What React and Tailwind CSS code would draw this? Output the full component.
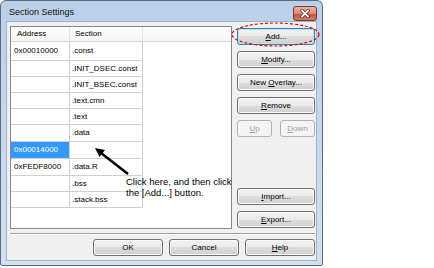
import React from 'react'

const rows = [
  { addr: '0x00010000', sec: '.const', h: 'h-[19px]' },
  { addr: '', sec: '.INIT_DSEC.const', h: 'h-[16px]' },
  { addr: '', sec: '.INIT_BSEC.const', h: 'h-[16px]' },
  { addr: '', sec: '.text.cmn', h: 'h-[16px]' },
  { addr: '', sec: '.text', h: 'h-[16px]' },
  { addr: '', sec: '.data', h: 'h-[17px]' },
  { addr: '0x00014000', sec: '', h: 'h-[17px]', selected: true },
  { addr: '0xFEDF8000', sec: '.data.R', h: 'h-[17px]' },
  { addr: '', sec: '.bss', h: 'h-[16px]' },
  { addr: '', sec: '.stack.bss', h: 'h-[16px]' },
]

// Win7 style push button
const Btn = ({ children, className = '', focused, disabled }) => {
  let look =
    'border-[#707070] text-black bg-[linear-gradient(to_bottom,#f2f2f2_0%,#ebebeb_50%,#dddddd_50%,#cfcfcf_100%)] shadow-[inset_0_0_0_1px_#fbfbfb]'
  if (focused)
    look =
      'border-[#3c7fb1] text-black bg-[linear-gradient(to_bottom,#f2f2f2_0%,#ebebeb_50%,#dddddd_50%,#cfcfcf_100%)] shadow-[inset_0_0_0_1px_#b7e2f7]'
  if (disabled) look = 'border-[#adb2b5] text-[#a0a0a0] bg-[#f4f4f4]'
  return (
    <div
      className={`h-[17px] flex items-center justify-center border rounded-[3px] text-[8px] leading-none ${look} ${className}`}
    >
      <span className="whitespace-pre">{children}</span>
    </div>
  )
}

export default function App() {
  return (
    <div className="relative w-[434px] h-[268px] bg-white font-['Liberation_Sans',Arial,sans-serif]">
      {/* Window */}
      <div className="w-[323px] h-[266px] flex flex-col border border-[#5b6b80] rounded-t-[6px] rounded-b-[2px] bg-gradient-to-b from-[#bad0e9] to-[#d2e0f0]">
        {/* Title bar */}
        <div className="h-[21px] flex items-start justify-between">
          <div className="pl-[8px] pt-[7px] text-[9px] leading-none text-[#111]">Section Settings</div>
          <div className="mt-[5px] mr-[5px] w-[24px] h-[15px] rounded-[3px] border border-[#7a3a33] bg-[linear-gradient(to_bottom,#ebb4a6_0%,#d98a77_50%,#c8563f_55%,#d27a63_100%)] flex items-center justify-center">
            <svg width="10" height="9" viewBox="0 0 10 9">
              <path d="M2 1.5 L8 7.5 M8 1.5 L2 7.5" stroke="#5a2a24" strokeWidth="3.2" strokeLinecap="square" />
              <path d="M2 1.5 L8 7.5 M8 1.5 L2 7.5" stroke="#ffffff" strokeWidth="1.8" strokeLinecap="square" />
            </svg>
          </div>
        </div>

        {/* Client area */}
        <div className="mx-[6px] h-[238px] bg-[#f0f0f0] shadow-[0_0_0_1px_#9fb3c8] pt-[4px] pl-[3px] pr-[1px] flex flex-col">
          <div className="flex">
            {/* List view */}
            <div className="w-[222px] h-[203px] border border-[#828790] bg-white text-[8px] leading-none text-black">
              <div className="flex h-[15px] border-b border-[#d5d5d5] bg-gradient-to-b from-white to-[#f5f6f7]">
                <div className="w-[59px] border-r border-[#e3e3e3] pl-[6px] flex items-center">Address</div>
                <div className="w-[73px] border-r border-[#e3e3e3] pl-[5px] flex items-center">Section</div>
              </div>
              {rows.map((r, i) => (
                <div key={i} className={`flex ${r.h}`}>
                  <div
                    className={`w-[59px] border-r border-b border-[#d0d0d0] pl-[3px] flex items-center ${
                      r.selected ? 'bg-[#3399ff] text-white' : ''
                    }`}
                  >
                    {r.addr}
                  </div>
                  <div className="w-[73px] border-r border-b border-[#d0d0d0] pl-[2px] flex items-center">{r.sec}</div>
                </div>
              ))}
            </div>

            {/* Button column */}
            <div className="ml-[5px] w-[78px] flex flex-col pt-[2px] pb-[1px]">
              <Btn focused>
                <u>A</u>dd...
              </Btn>
              <Btn className="mt-[6px]">
                <u>M</u>odify...
              </Btn>
              <Btn className="mt-[6px]">
                New <u>O</u>verlay...
              </Btn>
              <Btn className="mt-[6px]">
                <u>R</u>emove
              </Btn>
              <div className="mt-[6px] flex justify-between">
                <Btn disabled className="w-[35px]">
                  <u>U</u>p
                </Btn>
                <Btn disabled className="w-[35px]">
                  <u>D</u>own
                </Btn>
              </div>
              <Btn className="mt-auto">
                <u>I</u>mport...
              </Btn>
              <Btn className="mt-[6px]">
                <u>E</u>xport...
              </Btn>
            </div>
          </div>

          {/* Separator */}
          <div className="mt-[4px] h-[2px] border-t border-[#a0a0a0] border-b border-b-white" />

          {/* Bottom buttons */}
          <div className="mt-[4px] flex justify-end gap-[6px]">
            <Btn className="w-[70px]">OK</Btn>
            <Btn className="w-[70px]">Cancel</Btn>
            <Btn className="w-[70px]">
              <u>H</u>elp
            </Btn>
          </div>
        </div>
      </div>

      {/* Red dashed ellipse around Add */}
      <svg className="absolute left-[231px] top-[22px]" width="89" height="25" viewBox="0 0 89 25">
        <ellipse cx="44.5" cy="12.5" rx="43.5" ry="11.5" fill="none" stroke="#e00000" strokeWidth="1.2" strokeDasharray="3 2" />
      </svg>

      {/* Arrow */}
      <svg className="absolute left-0 top-0" width="434" height="268" viewBox="0 0 434 268">
        <line x1="128" y1="174" x2="101" y2="153" stroke="#000" strokeWidth="2.5" />
        <polygon points="95,148 105,150 99.5,157" fill="#000" />
      </svg>

      {/* Callout */}
      <div className="absolute left-[126px] top-[176px] text-[9.5px] leading-[11px] text-black whitespace-nowrap">
        <div>Click here, and then click</div>
        <div>the [Add...] button.</div>
      </div>
    </div>
  )
}
